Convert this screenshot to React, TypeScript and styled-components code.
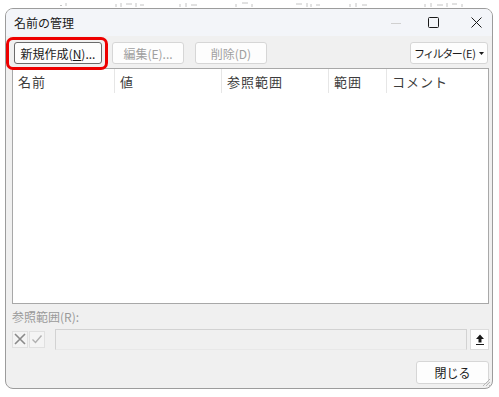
import styled, { createGlobalStyle } from "styled-components"

const GlobalStyle = createGlobalStyle`
  body {
    margin: 0;
    background: #ffffff;
    font-family: "Noto Sans CJK JP", "Noto Sans", sans-serif;
    font-size: 12px;
    color: #1a1a1a;
  }
`

const Page = styled.div`
  width: 499px;
  height: 397px;
  overflow: hidden;
  position: relative;
`

const SheetStrip = styled.svg`
  display: block;
`

const Dialog = styled.div`
  margin-left: 5px;
  width: 486px;
  height: 379px;
  border: 1px solid #9c9c9c;
  border-radius: 8px;
  background: #f0f0f0;
  display: flex;
  flex-direction: column;
  overflow: hidden;
  position: relative;
`

const TitleBar = styled.div`
  height: 27px;
  background: #f3f5f9;
  display: flex;
  align-items: center;
  padding-left: 8px;
`

const Title = styled.div`
  flex: 1;
  font-size: 12px;
  color: #1a1a1a;
`

const WinButton = styled.div<{ $mr?: number }>`
  width: 32px;
  height: 27px;
  margin-right: ${(p) => p.$mr ?? 0}px;
  display: flex;
  align-items: center;
  justify-content: center;
`

const Body = styled.div`
  flex: 1;
  display: flex;
  flex-direction: column;
  padding: 6px 3px 0 6px;
`

const Toolbar = styled.div`
  display: flex;
  align-items: center;
  height: 22px;
  margin-bottom: 4px;
`

const Button = styled.button<{ $w: number; $disabled?: boolean; $focus?: boolean }>`
  position: relative;
  width: ${(p) => p.$w}px;
  height: 22px;
  border: 1px solid ${(p) => (p.$focus ? "#6b6b6b" : "#d6d6d6")};
  border-radius: 3px;
  background: #fdfdfd;
  font-family: inherit;
  font-size: 12px;
  white-space: nowrap;
  color: ${(p) => (p.$disabled ? "#a0a0a0" : "#1a1a1a")};
  padding: 0;
  display: flex;
  align-items: center;
  justify-content: center;
  gap: 4px;
  box-sizing: border-box;
`

const NarrowText = styled.span`
  font-size: 11px;
`

const Kana = styled.span`
  letter-spacing: -1.5px;
  margin-right: 1px;
`

const Highlight = styled.span`
  position: absolute;
  left: -9px;
  top: -6px;
  right: -7px;
  bottom: -7px;
  border: 3.5px solid #ee0000;
  border-radius: 7px;
  pointer-events: none;
`

const List = styled.div`
  height: 236px;
  background: #ffffff;
  border: 1px solid #a8a8a8;
  box-sizing: border-box;
`

const Header = styled.div`
  display: grid;
  grid-template-columns: 102px 107px 107px 58px 1fr;
  height: 24px;
`

const HeadCell = styled.div<{ $last?: boolean }>`
  display: flex;
  align-items: center;
  padding-left: 5px;
  color: #3c3c3c;
  font-size: 13px;
  letter-spacing: 1px;
  border-right: ${(p) => (p.$last ? "none" : "1px solid #e6e6e6")};
`

const RefLabel = styled.div`
  color: #9a9a9a;
  font-size: 12px;
  margin-top: 4px;
  height: 17px;
  line-height: 17px;
`

const RefRow = styled.div`
  display: flex;
  align-items: center;
  height: 22px;
  margin-top: 3px;
`

const MiniButton = styled.div`
  width: 16px;
  height: 17px;
  border: 1px solid #e0e0e0;
  background: #f4f4f4;
  display: flex;
  align-items: center;
  justify-content: center;
  box-sizing: border-box;
  margin-right: 1px;
`

const RefInput = styled.div`
  flex: 1;
  height: 21px;
  margin-left: 9px;
  border: 1px solid #d2d2d2;
  border-bottom-color: #e8e8e8;
  background: #f0f0f0;
  box-sizing: border-box;
`

const CollapseButton = styled.div`
  width: 19px;
  height: 21px;
  margin-left: 3px;
  background: #ffffff;
  border: 1px solid #dcdcdc;
  box-sizing: border-box;
  display: flex;
  align-items: center;
  justify-content: center;
`

const Footer = styled.div`
  display: flex;
  justify-content: flex-end;
  margin-top: 11px;
`

const Grip = styled.svg`
  position: absolute;
  right: 1px;
  bottom: 1px;
`

export default function App() {
  return (
    <Page>
      <GlobalStyle />
      {/* faint spreadsheet content peeking above the dialog */}
      <SheetStrip width="499" height="8" viewBox="0 0 499 8">
        <g stroke="#c4c4c4" strokeWidth="1">
          <path d="M60 5.5h2M66 3v3M116 4v3M121 3v4M126 4h6M136 3v4M140 5h4" />
          <path d="M180 4v3M186 3v4M191 5h6M236 4v3M242 3h6M252 4v3" />
          <path d="M296 4h6M307 3v4M311 4v3M316 5h4M350 4v3M356 3v4M362 5h5" />
          <path d="M425 4v3M431 3v4M437 5h6M447 3v4M452 4h5M462 4v3" />
        </g>
      </SheetStrip>
      <Dialog>
        <TitleBar>
          <Title>名前の管理</Title>
          <WinButton $mr={5}>
            <svg width="10" height="10" viewBox="0 0 10 10">
              <path d="M0 5.5h10" stroke="#d0d0d0" strokeWidth="1" />
            </svg>
          </WinButton>
          <WinButton $mr={11}>
            <svg width="11" height="11" viewBox="0 0 11 11">
              <rect x="0.5" y="0.5" width="10" height="10" rx="1" fill="none" stroke="#1a1a1a" strokeWidth="1" />
            </svg>
          </WinButton>
          <WinButton>
            <svg width="11" height="11" viewBox="0 0 11 11">
              <path d="M0.5 0.5l10 10M10.5 0.5l-10 10" stroke="#1a1a1a" strokeWidth="1" />
            </svg>
          </WinButton>
        </TitleBar>
        <Body>
          <Toolbar>
            <Button $w={88} $focus style={{ marginLeft: 2 }}>
              <span>
                新規作成(<u>N</u>)...
              </span>
              <Highlight />
            </Button>
            <Button $w={72} $disabled style={{ marginLeft: 10 }}>
              編集(E)...
            </Button>
            <Button $w={72} $disabled style={{ marginLeft: 11 }}>
              削除(D)
            </Button>
            <div style={{ flex: 1 }} />
            <Button $w={78} style={{ marginRight: 1, gap: 3 }}>
              <NarrowText>
                <Kana>フィルター</Kana>(E)
              </NarrowText>
              <svg width="5" height="3" viewBox="0 0 5 3">
                <path d="M0 0h5L2.5 3z" fill="#1a1a1a" />
              </svg>
            </Button>
          </Toolbar>
          <List>
            <Header>
              <HeadCell>名前</HeadCell>
              <HeadCell>値</HeadCell>
              <HeadCell>参照範囲</HeadCell>
              <HeadCell>範囲</HeadCell>
              <HeadCell $last>コメント</HeadCell>
            </Header>
          </List>
          <RefLabel>参照範囲(R):</RefLabel>
          <RefRow>
            <MiniButton>
              <svg width="12" height="12" viewBox="0 0 12 12">
                <path d="M1 1l10 10M11 1L1 11" stroke="#8a8a8a" strokeWidth="1.6" />
              </svg>
            </MiniButton>
            <MiniButton>
              <svg width="12" height="12" viewBox="0 0 12 12">
                <path d="M1.5 6.5l3 3 6-7" stroke="#b0b0b0" strokeWidth="1.4" fill="none" />
              </svg>
            </MiniButton>
            <RefInput />
            <CollapseButton>
              <svg width="10" height="11" viewBox="0 0 10 11">
                <path d="M5 0.5L1 5h2.5v3.5h3V5H9z" fill="#1a1a1a" />
                <path d="M1 10.5h8" stroke="#1a1a1a" strokeWidth="1" />
              </svg>
            </CollapseButton>
          </RefRow>
          <Footer>
            <Button $w={73} style={{ height: 23 }}>
              閉じる
            </Button>
          </Footer>
        </Body>
        <Grip width="10" height="10" viewBox="0 0 10 10">
          <path d="M9 2L2 9M9 5L5 9M9 8L8 9" stroke="#b8b8b8" strokeWidth="1" />
        </Grip>
      </Dialog>
    </Page>
  )
}
